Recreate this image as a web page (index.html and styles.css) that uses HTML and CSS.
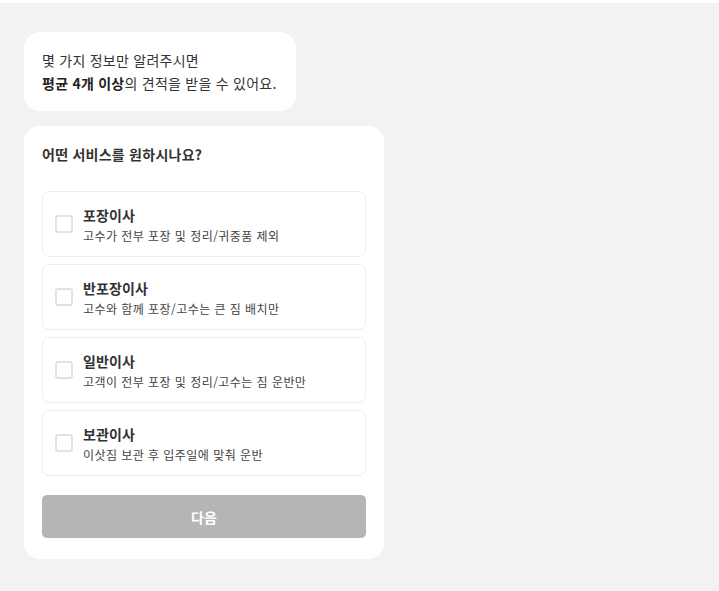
FILE: index.html
```html
<!DOCTYPE html>
<html lang="ko">
<head>
  <title>견적 요청</title>
  <meta charset="utf-8">
  <meta name="viewport" content="width=device-width, initial-scale=1.0">
  <link rel="stylesheet" href="styles.css">
</head>
<body>
  <div class="page">
    <div class="bubble">
      <p>몇 가지 정보만 알려주시면</p>
      <p><b>평균 4개 이상</b>의 견적을 받을 수 있어요.</p>
    </div>

    <div class="card">
      <h2>어떤 서비스를 원하시나요?</h2>

      <div class="options">
        <label class="option">
          <input type="checkbox">
          <span class="box"></span>
          <span class="text">
            <span class="name">포장이사</span>
            <span class="desc">고수가 전부 포장 및 정리/귀중품 제외</span>
          </span>
        </label>
        <label class="option">
          <input type="checkbox">
          <span class="box"></span>
          <span class="text">
            <span class="name">반포장이사</span>
            <span class="desc">고수와 함께 포장/고수는 큰 짐 배치만</span>
          </span>
        </label>
        <label class="option">
          <input type="checkbox">
          <span class="box"></span>
          <span class="text">
            <span class="name">일반이사</span>
            <span class="desc">고객이 전부 포장 및 정리/고수는 짐 운반만</span>
          </span>
        </label>
        <label class="option">
          <input type="checkbox">
          <span class="box"></span>
          <span class="text">
            <span class="name">보관이사</span>
            <span class="desc">이삿짐 보관 후 입주일에 맞춰 운반</span>
          </span>
        </label>
      </div>

      <button class="next" disabled>다음</button>
    </div>
  </div>
</body>
</html>
```

FILE: styles.css
```css
* {margin: 0; padding: 0; box-sizing: border-box;}
body {
  font-family: "Noto Sans CJK KR", "Noto Sans", sans-serif;
  color: #333;
  background: #f2f2f2;
  border-top: 3px solid #fff;
  min-height: 100vh;
}
.page {padding: 29px 24px; display: flex; flex-direction: column; align-items: flex-start; gap: 15px;}

.bubble {background: #fff; border-radius: 16px; padding: 17px 19px 16px 18px; font-size: 14px; line-height: 23px; letter-spacing: 0.25px;}
.bubble b {font-weight: 700; color: #222;}

.card {width: 360px; background: #fff; border-radius: 16px; padding: 18px 18px 21px;}
.card h2 {font-size: 14px; font-weight: 700; line-height: 20px; letter-spacing: 0.25px; color: #333;}

.options {display: flex; flex-direction: column; gap: 7px; margin-top: 27px;}
.option {display: flex; align-items: center; height: 66px; padding: 0 12px; border: 1px solid #ededed; border-radius: 7px; cursor: pointer;}
.option input {display: none;}
.box {width: 18px; height: 18px; border: 2px solid #e2e2e2; border-radius: 3px; flex: none; margin-right: 10px;}
.option input:checked + .box {background: #bbb; border-color: #bbb;}
.text {display: flex; flex-direction: column; padding-top: 1px;}
.name {font-size: 14px; font-weight: 700; line-height: 21px; letter-spacing: 0.1px; color: #333;}
.desc {font-size: 12px; line-height: 19px; color: #444; letter-spacing: 0.45px;}

.next {display: block; width: 100%; height: 43px; margin-top: 19px; border: 0; border-radius: 5px; background: #b5b5b5; color: #fff; font-family: inherit; font-size: 14px; font-weight: 700;}
```
